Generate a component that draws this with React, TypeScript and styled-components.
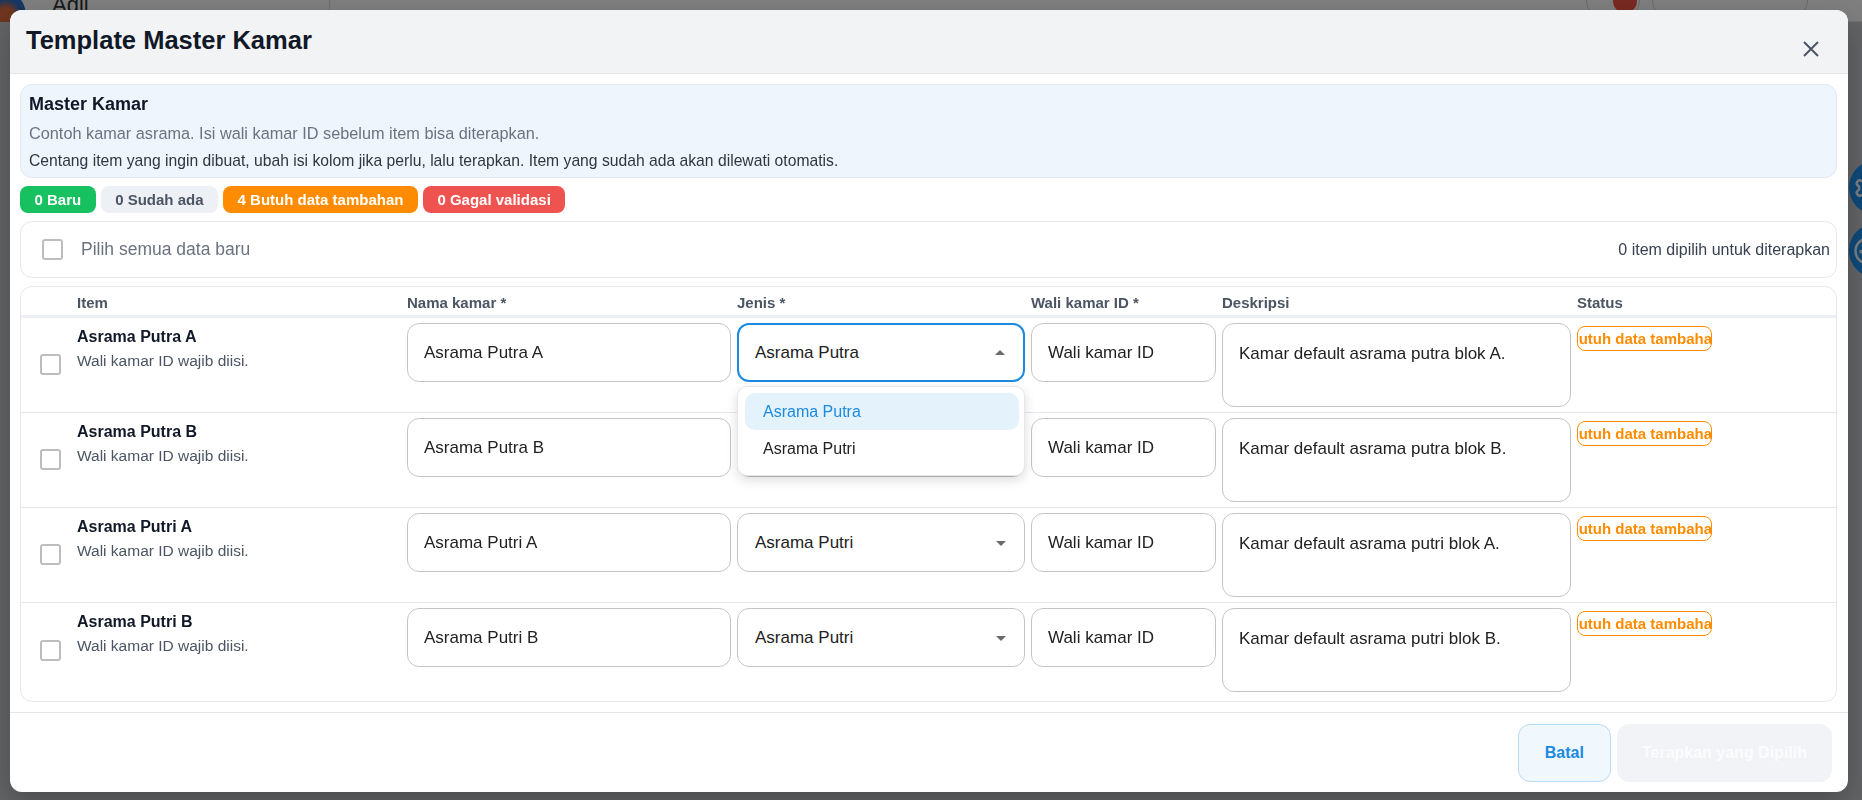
import styled, { createGlobalStyle } from "styled-components";
import { Settings, Palette } from "lucide-react";

const GlobalStyle = createGlobalStyle`
  * {
    box-sizing: border-box;
  }

  html,
  body {
    margin: 0;
    padding: 0;
  }

  body {
    font-family: "Liberation Sans", Arial, Helvetica, sans-serif;
    color: #1f2937;
    overflow: hidden;
  }
`;

/* ---------- page behind the dialog ---------- */

const Page = styled.div`
  position: relative;
  height: 800px;
  background: #c6c9ce;
  display: flex;
  flex-direction: column;
`;

const TopBar = styled.div`
  height: 22px;
  flex: none;
  background: #fff;
  display: flex;
  align-items: flex-start;
  border-bottom: 1px solid #e5e7eb;
`;

const Avatar = styled.div`
  width: 50px;
  height: 50px;
  margin: -10px 0 0 -24px;
  border-radius: 50%;
  background: radial-gradient(circle at 60% 50%, #e06a3b 0 18%, #2b6fc4 40%);
`;

const UserName = styled.span`
  margin: -8px 0 0 26px;
  font-size: 22px;
  color: #333;
`;

const BarDivider = styled.div`
  width: 1px;
  height: 22px;
  margin-left: 240px;
  background: #ddd;
`;

const BarSpacer = styled.div`
  flex: 1;
`;

const RoundButton = styled.div`
  width: 54px;
  height: 40px;
  margin-top: -20px;
  border: 1px solid #cfd3d8;
  border-radius: 20px;
  position: relative;
`;

const Dot = styled.span`
  position: absolute;
  left: 26px;
  top: 8px;
  width: 24px;
  height: 24px;
  border-radius: 50%;
  background: #f25545;
`;

const PillButton = styled.div`
  width: 156px;
  height: 40px;
  margin: -20px 54px 0 12px;
  border: 1px solid #cfd3d8;
  border-radius: 20px;
`;

const PageContent = styled.div`
  flex: 1;
  background: #c6c9ce;
`;

const FloatingDock = styled.div`
  position: absolute;
  right: -42px;
  top: 160px;
  display: flex;
  flex-direction: column;
  gap: 8px;
`;

const DockButton = styled.div`
  width: 55px;
  height: 55px;
  border-radius: 50%;
  background: #1c94f6;
  color: #fff;
  display: flex;
  align-items: center;
  padding-left: 4px;
`;

const Overlay = styled.div`
  position: fixed;
  inset: 0;
  background: rgba(0, 0, 0, 0.5);
`;

/* ---------- dialog ---------- */

const Dialog = styled.div`
  position: fixed;
  left: 10px;
  top: 10px;
  width: 1838px;
  height: 782px;
  background: #fff;
  border-radius: 12px;
  display: flex;
  flex-direction: column;
  overflow: hidden;
  box-shadow: 0 12px 32px rgba(0, 0, 0, 0.25);
`;

const DialogHeader = styled.header`
  height: 64px;
  flex: none;
  background: #f2f3f5;
  border-bottom: 1px solid #e3e5e8;
  display: flex;
  align-items: center;
  justify-content: space-between;
  padding: 0 29px 0 16px;
`;

const DialogTitle = styled.h2`
  margin: 0 0 2px;
  font-size: 25.5px;
  font-weight: 700;
  color: #111827;
`;

const CloseButton = styled.button`
  width: 16px;
  height: 16px;
  margin-top: 14px;
  padding: 0;
  border: 0;
  background: none;
  color: #4b5563;
  display: flex;
`;

const DialogBody = styled.div`
  padding: 10px 11px 10px 10px;
  display: flex;
  flex-direction: column;
  gap: 8px;
`;

const InfoBox = styled.div`
  height: 94px;
  padding: 8px 8px 0;
  background: #eef5fc;
  border: 1px solid #e2e8f0;
  border-radius: 12px;

  > h3 {
    margin: 0;
    font-size: 18px;
    line-height: 22px;
    font-weight: 700;
    color: #111827;
  }

  > p {
    margin: 8px 0 0;
    font-size: 16.3px;
    line-height: 20px;
    color: #6b7280;
  }

  > p.hint {
    margin-top: 8px;
    font-size: 15.7px;
    color: #2f3743;
  }
`;

const BadgeRow = styled.div`
  display: flex;
  gap: 5px;
`;

const CountBadge = styled.span<{ $tone: "green" | "gray" | "orange" | "red" }>`
  height: 27px;
  padding: 0 14.5px;
  border-radius: 8px;
  display: inline-flex;
  align-items: center;
  font-size: 15px;
  font-weight: 700;
  color: ${(p) => (p.$tone === "gray" ? "#4b5563" : "#fff")};
  background: ${(p) =>
    ({
      green: "#17c15f",
      gray: "#edf0f4",
      orange: "#ff8c00",
      red: "#ef5350",
    })[p.$tone]};
`;

const SelectAllCard = styled.div`
  height: 57px;
  padding: 0 6px 0 21px;
  border: 1px solid #e5e7eb;
  border-radius: 12px;
  display: flex;
  align-items: center;
  gap: 18px;

  > span.label {
    font-size: 17.5px;
    color: #6b7280;
  }

  > span.count {
    margin-left: auto;
    font-size: 16px;
    color: #374151;
  }
`;

const Checkbox = styled.span`
  width: 21px;
  height: 21px;
  flex: none;
  border: 2px solid #bdbdbd;
  border-radius: 3px;
  background: #fff;
`;

const TableCard = styled.div`
  border: 1px solid #e5e7eb;
  border-radius: 12px;
  padding-bottom: 3px;
`;

const gridColumns = `
  display: grid;
  grid-template-columns: 50px 324px 324px 288px 185px 349px 1fr;
  column-gap: 6px;
`;

const HeaderRow = styled.div`
  ${gridColumns}
  height: 31px;
  align-items: center;
  padding-top: 2px;
  border-bottom: 3px solid #eceff3;

  > span {
    font-size: 15px;
    font-weight: 700;
    color: #4b5563;
  }
`;

const DataRow = styled.div<{ $last?: boolean }>`
  ${gridColumns}
  height: 95px;
  padding-top: 5px;
  align-items: start;
  border-bottom: ${(p) => (p.$last ? "none" : "1px solid #e5e7eb")};
`;

const CheckCell = styled.div`
  align-self: center;
  padding: 0 0 0 19px;
  margin-top: -6px;
  display: flex;
`;

const ItemCell = styled.div`
  padding-top: 4px;

  > strong {
    display: block;
    font-size: 16px;
    line-height: 20px;
    color: #111827;
  }

  > span {
    display: block;
    margin-top: 4px;
    font-size: 15.5px;
    line-height: 20px;
    color: #4b5563;
  }
`;

const TextField = styled.input`
  width: 100%;
  height: 59px;
  padding: 0 16px;
  border: 1px solid #c4c4c4;
  border-radius: 12px;
  background: #fff;
  font-family: inherit;
  font-size: 17px;
  color: #222;
  outline: none;
`;

const TextArea = styled.textarea`
  width: 100%;
  height: 84px;
  padding: 18px 16px 0;
  border: 1px solid #c4c4c4;
  border-radius: 12px;
  background: #fff;
  font-family: inherit;
  font-size: 17px;
  line-height: 24px;
  color: #222;
  resize: none;
  overflow: hidden;
  outline: none;
`;

const SelectWrap = styled.div`
  position: relative;
`;

const SelectBox = styled.div<{ $open?: boolean }>`
  height: 59px;
  padding: 0 11px 0 ${(p) => (p.$open ? 16 : 17)}px;
  border: ${(p) => (p.$open ? "2px solid #1b8ae0" : "1px solid #c4c4c4")};
  border-radius: 12px;
  background: #fff;
  display: flex;
  align-items: center;
  justify-content: space-between;
  font-size: 17px;
  color: #222;
`;

const Menu = styled.ul`
  position: absolute;
  top: calc(100% + 4px);
  left: 0;
  right: 0;
  z-index: 5;
  margin: 0;
  padding: 6px 5px 8px 7px;
  list-style: none;
  background: #fff;
  border: 1px solid #e5e7eb;
  border-radius: 10px;
  box-shadow: 0 4px 12px rgba(0, 0, 0, 0.14);
`;

const MenuItem = styled.li<{ $selected?: boolean }>`
  height: 37px;
  padding: 0 18px;
  border-radius: 10px;
  display: flex;
  align-items: center;
  font-size: 16px;
  color: ${(p) => (p.$selected ? "#1b8ae0" : "#222")};
  background: ${(p) => (p.$selected ? "#e4f2fc" : "transparent")};
`;

const StatusBadge = styled.div`
  width: 135px;
  height: 25px;
  margin-top: 3px;
  border: 1px solid #ff8c00;
  border-radius: 8px;
  display: flex;
  align-items: center;
  justify-content: center;
  overflow: hidden;
  white-space: nowrap;
  font-size: 15px;
  font-weight: 700;
  color: #ff8c00;
`;

const DialogFooter = styled.footer`
  margin-top: auto;
  padding: 11px 16px 13px;
  border-top: 1px solid #e3e5e8;
  display: flex;
  justify-content: flex-end;
  gap: 6px;
`;

const FooterButton = styled.button<{ $variant: "ghost" | "disabled" }>`
  height: 58px;
  padding: 0 ${(p) => (p.$variant === "ghost" ? 26 : 24)}px;
  border-radius: 12px;
  font-family: inherit;
  font-size: 16px;
  font-weight: 700;
  border: 1px solid
    ${(p) => (p.$variant === "ghost" ? "#b8dcf4" : "#f1f3f6")};
  background: ${(p) => (p.$variant === "ghost" ? "#f0f7fd" : "#f1f3f6")};
  color: ${(p) => (p.$variant === "ghost" ? "#1b8ae0" : "#fbfcfd")};
`;

const Arrow = ({ up }: { up?: boolean }) => (
  <svg width="24" height="24" viewBox="0 0 24 24" fill="#6b6b6b">
    <path d={up ? "M7 14l5-5 5 5z" : "M7 10l5 5 5-5z"} />
  </svg>
);

const rows = [
  {
    title: "Asrama Putra A",
    jenis: "Asrama Putra",
    desc: "Kamar default asrama putra blok A.",
    open: true,
  },
  {
    title: "Asrama Putra B",
    jenis: "Asrama Putra",
    desc: "Kamar default asrama putra blok B.",
  },
  {
    title: "Asrama Putri A",
    jenis: "Asrama Putri",
    desc: "Kamar default asrama putri blok A.",
  },
  {
    title: "Asrama Putri B",
    jenis: "Asrama Putri",
    desc: "Kamar default asrama putri blok B.",
  },
];

export default function App() {
  return (
    <>
      <GlobalStyle />
      <Page>
        <TopBar>
          <Avatar />
          <UserName>Agil</UserName>
          <BarDivider />
          <BarSpacer />
          <RoundButton>
            <Dot />
          </RoundButton>
          <PillButton />
        </TopBar>
        <PageContent />
        <FloatingDock>
          <DockButton>
            <Settings size={30} />
          </DockButton>
          <DockButton>
            <Palette size={30} />
          </DockButton>
        </FloatingDock>
      </Page>
      <Overlay />

      <Dialog>
        <DialogHeader>
          <DialogTitle>Template Master Kamar</DialogTitle>
          <CloseButton aria-label="Tutup">
            <svg width="16" height="16" viewBox="0 0 16 16">
              <path
                d="M1 1L15 15M15 1L1 15"
                stroke="currentColor"
                strokeWidth="2"
              />
            </svg>
          </CloseButton>
        </DialogHeader>

        <DialogBody>
          <InfoBox>
            <h3>Master Kamar</h3>
            <p>Contoh kamar asrama. Isi wali kamar ID sebelum item bisa diterapkan.</p>
            <p className="hint">
              Centang item yang ingin dibuat, ubah isi kolom jika perlu, lalu
              terapkan. Item yang sudah ada akan dilewati otomatis.
            </p>
          </InfoBox>

          <BadgeRow>
            <CountBadge $tone="green">0 Baru</CountBadge>
            <CountBadge $tone="gray">0 Sudah ada</CountBadge>
            <CountBadge $tone="orange">4 Butuh data tambahan</CountBadge>
            <CountBadge $tone="red">0 Gagal validasi</CountBadge>
          </BadgeRow>

          <SelectAllCard>
            <Checkbox />
            <span className="label">Pilih semua data baru</span>
            <span className="count">0 item dipilih untuk diterapkan</span>
          </SelectAllCard>

          <TableCard>
            <HeaderRow>
              <span />
              <span>Item</span>
              <span>Nama kamar *</span>
              <span>Jenis *</span>
              <span>Wali kamar ID *</span>
              <span>Deskripsi</span>
              <span>Status</span>
            </HeaderRow>
            {rows.map((row, i) => (
              <DataRow key={row.title} $last={i === rows.length - 1}>
                <CheckCell>
                  <Checkbox />
                </CheckCell>
                <ItemCell>
                  <strong>{row.title}</strong>
                  <span>Wali kamar ID wajib diisi.</span>
                </ItemCell>
                <TextField readOnly defaultValue={row.title} />
                <SelectWrap>
                  <SelectBox $open={row.open}>
                    {row.jenis}
                    <Arrow up={row.open} />
                  </SelectBox>
                  {row.open && (
                    <Menu>
                      <MenuItem $selected>Asrama Putra</MenuItem>
                      <MenuItem>Asrama Putri</MenuItem>
                    </Menu>
                  )}
                </SelectWrap>
                <TextField readOnly defaultValue="Wali kamar ID" />
                <TextArea readOnly defaultValue={row.desc} />
                <StatusBadge>Butuh data tambahan</StatusBadge>
              </DataRow>
            ))}
          </TableCard>
        </DialogBody>

        <DialogFooter>
          <FooterButton $variant="ghost">Batal</FooterButton>
          <FooterButton $variant="disabled">Terapkan yang Dipilih</FooterButton>
        </DialogFooter>
      </Dialog>
    </>
  );
}
